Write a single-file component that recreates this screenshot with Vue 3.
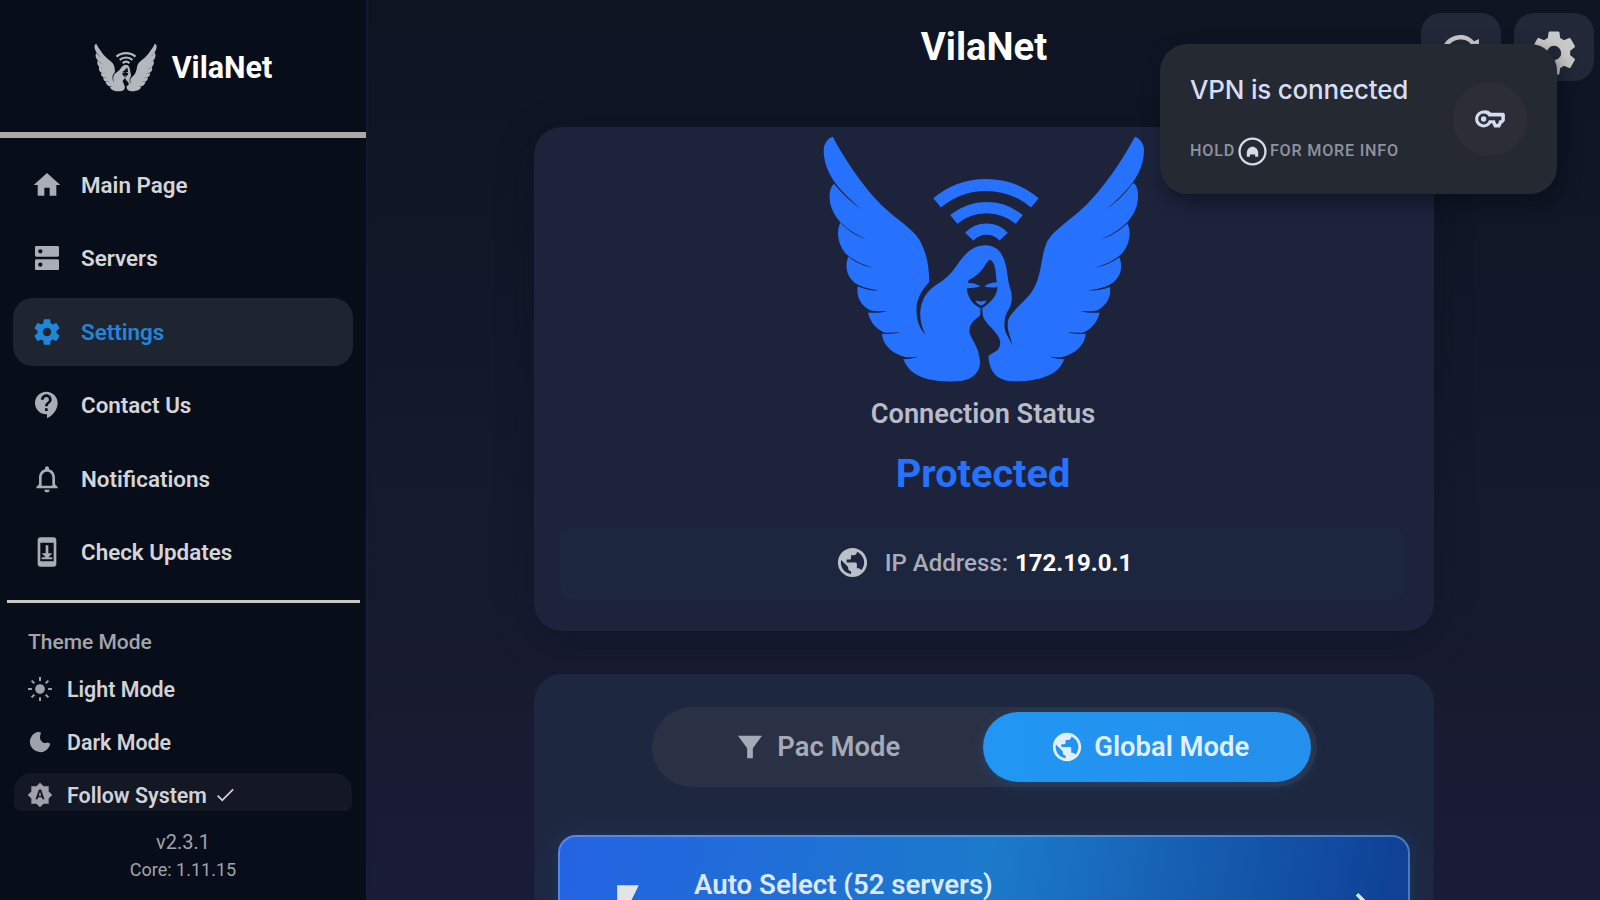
<script setup>
import { ref } from 'vue'

const icons = {
  home: 'M10 20v-6h4v6h5v-8h3L12 3 2 12h3v8z',
  servers: 'M20 13H4c-.55 0-1 .45-1 1v6c0 .55.45 1 1 1h16c.55 0 1-.45 1-1v-6c0-.55-.45-1-1-1zM7 18.6a1.6 1.6 0 1 1 0-3.2 1.6 1.6 0 0 1 0 3.2zM20 3H4c-.55 0-1 .45-1 1v6c0 .55.45 1 1 1h16c.55 0 1-.45 1-1V4c0-.55-.45-1-1-1zM7 8.6a1.6 1.6 0 1 1 0-3.2 1.6 1.6 0 0 1 0 3.2z',
  settings: 'M19.14 12.94c.04-.3.06-.61.06-.94 0-.32-.02-.64-.07-.94l2.03-1.58c.18-.14.23-.41.12-.61l-1.92-3.32c-.12-.22-.37-.29-.59-.22l-2.39.96c-.5-.38-1.03-.7-1.62-.94l-.36-2.54c-.04-.24-.24-.41-.48-.41h-3.84c-.24 0-.43.17-.47.41l-.36 2.54c-.59.24-1.13.57-1.62.94l-2.39-.96c-.22-.08-.47 0-.59.22L2.74 8.87c-.12.21-.08.47.12.61l2.03 1.58c-.05.3-.09.63-.09.94s.02.64.07.94l-2.03 1.58c-.18.14-.23.41-.12.61l1.92 3.32c.12.22.37.29.59.22l2.39-.96c.5.38 1.03.7 1.62.94l.36 2.54c.05.24.24.41.48.41h3.84c.24 0 .44-.17.47-.41l.36-2.54c.59-.24 1.13-.56 1.62-.94l2.39.96c.22.08.47 0 .59-.22l1.92-3.32c.12-.22.07-.47-.12-.61l-2.01-1.58zM12 15.2a3.2 3.2 0 1 1 0-6.4 3.2 3.2 0 0 1 0 6.4z',
  contact: 'M11.5 2C6.81 2 3 5.81 3 10.5S6.81 19 11.5 19h.5v3c4.86-2.34 8-7 8-11.5C20 5.81 16.19 2 11.5 2zm1 14.5h-2v-2h2v2zm0-3.5h-2c0-3.25 3-3 3-5 0-1.1-.9-2-2-2s-2 .9-2 2h-2c0-2.21 1.79-4 4-4s4 1.79 4 4c0 2.5-3 2.75-3 5z',
  bell: 'M12 22c1.1 0 2-.9 2-2h-4c0 1.1.9 2 2 2zm6-6v-5c0-3.07-1.63-5.64-4.5-6.32V4c0-.83-.67-1.5-1.5-1.5s-1.5.67-1.5 1.5v.68C7.64 5.36 6 7.92 6 11v5l-2 2v1h16v-1l-2-2zm-2 1H8v-6c0-2.48 1.51-4.5 4-4.5s4 2.02 4 4.5v6z',
  update: 'M17 1H7c-1.1 0-2 .9-2 2v18c0 1.1.9 2 2 2h10c1.1 0 2-.9 2-2V3c0-1.1-.9-2-2-2zM17 19H7V5h10v14zm-1-6h-3V7h-2v6H8l3 3H8v1.5h8V16h-3z',
  sun: 'M12 7.5a4.5 4.5 0 1 0 0 9 4.5 4.5 0 0 0 0-9zM11.1 1h1.8v3.5h-1.8zM11.1 19.5h1.8V23h-1.8zM1 11.1h3.5v1.8H1zM19.5 11.1H23v1.8h-3.5zM4.9 3.6l2.5 2.5-1.3 1.3-2.5-2.5zM19.1 3.6l1.3 1.3-2.5 2.5-1.3-1.3zM6.1 16.6l1.3 1.3-2.5 2.5-1.3-1.3zM17.9 16.6l2.5 2.5-1.3 1.3-2.5-2.5z',
  moon: 'M10.5 2.5A9.5 9.5 0 1 0 21.5 13.5L19 12.5a5 5 0 0 1-7-4.5c0-2 .6-3.5 1-4.5z',
  auto: 'M10.85 12.65h2.3L12 9l-1.15 3.65zM20 8.69V4h-4.69L12 .69 8.69 4H4v4.69L.69 12 4 15.31V20h4.69L12 23.31 15.31 20H20v-4.69L23.31 12 20 8.69zM14.3 16l-.7-2h-3.2l-.7 2H7.8L11 7h2l3.2 9h-1.9z',
  check: 'M9 16.4L4.6 12l-1.3 1.3L9 19 21.5 6.5l-1.3-1.3z',
  globe: 'M12 2C6.48 2 2 6.48 2 12s4.48 10 10 10 10-4.48 10-10S17.52 2 12 2zm-1 17.93c-3.95-.49-7-3.85-7-7.93 0-.62.08-1.21.21-1.79L9 15v1c0 1.1.9 2 2 2v1.93zm6.9-2.54c-.26-.81-1-1.39-1.9-1.39h-1v-3c0-.55-.45-1-1-1H8v-2h2c.55 0 1-.45 1-1V7h2c1.1 0 2-.9 2-2v-.41c2.93 1.19 5 4.06 5 7.41 0 2.08-.8 3.97-2.1 5.39z',
  filter: 'M3.5 4h17L14 12.8V20h-4v-7.2z',
  refresh: 'M12 4C8.4 4 5.4 5.8 4 9h2.3C7.5 7.2 9.6 6 12 6c1.66 0 3.14.69 4.22 1.78L13 11h7V5.8l-2.2 1C16.4 5.2 14.3 4 12 4zM4 13h2a6 6 0 0 0 11.6 1.5h2.1A8 8 0 0 1 4 13z',
  bolt: 'M7 2v11h3v9l7-12h-4l4-8z',
  chevron: 'M10 6L8.59 7.41 13.17 12l-4.58 4.59L10 18l6-6z',
  key: 'M7.5 6a6 6 0 1 0 5.2 9h.8l1.5 3h4l1.5-3h.5l1.5-2V8.5l-1-1h-8.8A6 6 0 0 0 7.5 6zm0 2.2c1.6 0 2.9.8 3.5 2h9v2.6h-1.5l-.8 2.600h-1.400l-.8-2.600h-4.300A3.8 3.8 0 1 1 7.5 8.200zm0 1.900a1.900 1.900 0 1 0 0 3.800 1.900 1.900 0 0 0 0-3.800z',
}

const nav = [
  { label: 'Main Page', icon: 'home' },
  { label: 'Servers', icon: 'servers' },
  { label: 'Settings', icon: 'settings' },
  { label: 'Contact Us', icon: 'contact' },
  { label: 'Notifications', icon: 'bell' },
  { label: 'Check Updates', icon: 'update' },
]

const themes = [
  { label: 'Light Mode', icon: 'sun' },
  { label: 'Dark Mode', icon: 'moon' },
  { label: 'Follow System', icon: 'auto' },
]

const modes = [
  { label: 'Pac Mode', icon: 'filter' },
  { label: 'Global Mode', icon: 'globe' },
]

const page = ref('Settings')
const theme = ref('Follow System')
const mode = ref('Global Mode')
</script>

<template>
  <svg class="defs" width="0" height="0">
    <symbol id="angel" viewBox="60 40 980 755">
      <!-- wings, hair and the two lobes at the bottom -->
      <path
        d="M95 48C130 115 190 205 250 262C290 300 335 325 357 360C375 395 386 430 386 487
        C360 515 345 545 348 580C350 612 360 632 376 646C357 615 354 575 366 545C376 518 395 503 425 484
        C470 452 480 405 520 385C555 368 592 376 607 408C625 442 620 480 632 510C639 535 634 556 628 566
        C608 595 611 630 620 645L637 677C632 650 620 635 624 605C630 580 660 560 690 525C728 475 720 420 740 370
        C755 335 812 300 852 262C912 205 972 115 1007 48
        C1017 50 1030 62 1034 80C1038 120 1020 160 1000 187C980 215 950 240 922 268C950 245 975 225 1002 188
        C1020 195 1020 240 1010 265C1002 285 993 295 985 306C960 330 935 345 907 358C935 348 960 333 984 310
        C996 330 992 360 982 380C975 395 968 402 960 408C940 425 915 435 887 444C915 438 940 428 960 412
        C970 435 968 460 950 480C945 487 938 491 930 496C910 505 890 510 867 512C890 514 910 510 932 502
        C936 530 925 555 895 572C880 576 865 575 842 575C865 580 880 581 901 579
        C892 615 870 632 850 640C835 641 820 640 804 638C820 644 840 645 859 643
        C855 680 825 705 785 714C772 715 760 714 749 713C762 718 778 720 794 720C774 775 704 787 637 787
        C592 785 567 760 565 710L592 693C604 680 602 665 594 650C578 625 553 610 548 588L546 566
        C570 550 590 530 592 505L588 470C586 440 580 421 568 420C550 435 555 455 505 482
        L500 512C505 540 522 558 541 566L540 588C520 603 505 615 508 640C515 665 536 680 540 730
        C538 765 510 787 465 787C400 788 330 780 308 720C324 720 340 718 353 713C342 714 330 715 317 714
        C277 705 247 680 243 643C262 645 282 644 298 638C282 640 267 641 252 640
        C232 632 210 615 201 579C222 581 237 580 260 575C237 575 222 576 207 572C177 555 166 530 170 500
        C192 510 212 514 235 512C212 510 192 505 172 496C164 491 157 487 152 480C134 460 132 435 142 410
        C162 428 187 438 215 444C187 435 162 425 142 408C134 402 127 395 120 380C110 360 106 330 118 308
        C142 333 167 348 195 358C167 345 142 330 117 306C109 295 100 285 92 265C82 240 82 205 98 190
        C127 225 152 245 180 268C152 240 122 215 102 187C82 160 64 120 68 80C72 62 85 50 95 48Z"
      />
      <!-- eyes and mouth -->
      <path d="M500 490Q522 488 541 500Q520 508 499 504ZM552 500Q570 488 592 488V502Q570 506 552 500ZM525 543Q543 548 560 543Q552 557 543 557Q533 557 525 543Z" />
      <g fill="none" stroke="currentColor">
        <path d="M410 248A228 228 0 0 1 705 248" stroke-width="36" />
        <path d="M460 298A155 155 0 0 1 658 298" stroke-width="34" />
        <path d="M507 350A71 71 0 0 1 611 350" stroke-width="34" />
      </g>
    </symbol>
  </svg>

  <div class="app">
    <aside class="sidebar">
      <div class="brand">
        <svg class="brand-logo"><use href="#angel" /></svg>
        <span>VilaNet</span>
      </div>

      <nav class="nav">
        <a
          v-for="item in nav"
          :key="item.label"
          class="nav-item"
          :class="{ active: item.label === page }"
          @click="page = item.label"
        >
          <svg viewBox="0 0 24 24"><path :d="icons[item.icon]" /></svg>
          <span>{{ item.label }}</span>
        </a>
      </nav>

      <div class="themes">
        <p class="themes-title">Theme Mode</p>
        <a
          v-for="item in themes"
          :key="item.label"
          class="theme"
          :class="{ active: item.label === theme }"
          @click="theme = item.label"
        >
          <svg viewBox="0 0 24 24"><path :d="icons[item.icon]" /></svg>
          <span>{{ item.label }}</span>
          <svg v-if="item.label === theme" class="check" viewBox="0 0 24 24"><path :d="icons.check" /></svg>
        </a>
      </div>

      <div class="version">
        <p>v2.3.1</p>
        <p class="core">Core: 1.11.15</p>
      </div>
    </aside>

    <main class="main">
      <header class="header">
        <h1>VilaNet</h1>
        <div class="actions">
          <button><svg viewBox="0 0 24 24"><path :d="icons.refresh" /></svg></button>
          <button><svg viewBox="0 0 24 24"><path :d="icons.settings" /></svg></button>
        </div>
      </header>

      <section class="card status">
        <svg class="status-logo"><use href="#angel" /></svg>
        <p class="status-label">Connection Status</p>
        <p class="status-value">Protected</p>
        <div class="ip">
          <svg viewBox="0 0 24 24"><path :d="icons.globe" /></svg>
          <span class="ip-label">IP Address:</span>
          <span class="ip-value">172.19.0.1</span>
        </div>
      </section>

      <section class="card connect">
        <div class="toggle">
          <button
            v-for="item in modes"
            :key="item.label"
            :class="{ active: item.label === mode }"
            @click="mode = item.label"
          >
            <svg viewBox="0 0 24 24"><path :d="icons[item.icon]" /></svg>
            <span>{{ item.label }}</span>
          </button>
        </div>
        <div class="server">
          <svg class="bolt" viewBox="0 0 24 24"><path :d="icons.bolt" /></svg>
          <span>Auto Select (52 servers)</span>
          <svg class="chevron" viewBox="0 0 24 24"><path :d="icons.chevron" /></svg>
        </div>
      </section>
    </main>

    <div class="toast">
      <div class="toast-text">
        <p class="toast-title">VPN is connected</p>
        <p class="toast-hint">
          <span>HOLD</span>
          <svg viewBox="0 0 28 28">
            <circle cx="14" cy="14" r="12.5" fill="none" stroke="currentColor" stroke-width="2.2" />
            <path d="M14 9.5c3 0 5 2.5 5.5 5V19h-3v-2h-5v2h-3v-4.5c.5-2.5 2.5-5 5.5-5z" />
          </svg>
          <span>FOR MORE INFO</span>
        </p>
      </div>
      <div class="toast-icon">
        <svg viewBox="0 0 24 24"><path :d="icons.key" /></svg>
      </div>
    </div>
  </div>
</template>

<style>
body {
  margin: 0;
  overflow: hidden;
  background: #0f1424;
}
</style>

<style scoped>
* {
  box-sizing: border-box;
}

p,
h1 {
  margin: 0;
}

svg {
  flex: none;
  fill: currentColor;
}

a,
button {
  cursor: pointer;
}

button {
  border: 0;
  padding: 0;
  font: inherit;
  color: inherit;
}

.defs {
  position: absolute;
}

.app {
  position: relative;
  display: flex;
  width: 1600px;
  height: 900px;
  overflow: hidden;
  font-family: Roboto, sans-serif;
  color: #fff;
  background: linear-gradient(180deg, #0e1422 0%, #13192b 45%, #181b30 78%, #1a1c37 100%);
}

.sidebar {
  display: flex;
  flex-direction: column;
  width: 366px;
  background: #080d1a;
  box-shadow: 1px 0 3px #1b2036;
}

.brand {
  display: flex;
  align-items: center;
  justify-content: center;
  gap: 15px;
  height: 138px;
  padding-top: 3px;
  border-bottom: 6px solid #aba8a8;
  font-size: 30.5px;
  font-weight: 700;
}

.brand-logo {
  width: 63px;
  height: 49px;
  color: #b5b7be;
}

.nav {
  display: grid;
  grid-auto-rows: 68px;
  gap: 5.4px;
  margin: 0 6px 0 7px;
  padding: 13px 7px 14.5px 6px;
  border-bottom: 3px solid #cbc8c5;
}

.nav-item {
  display: flex;
  align-items: center;
  gap: 18px;
  padding-left: 18px;
  border-radius: 20px;
  font-size: 22.4px;
  font-weight: 600;
  color: #d4d5d9;
}

.nav-item svg {
  width: 32px;
  height: 32px;
  color: #abadb5;
}

.nav-item.active,
.nav-item.active svg {
  color: #2086da;
}

.nav-item.active {
  background: #1f2431;
}

.themes {
  padding: 22px 14px 0;
}

.themes-title {
  padding-left: 14px;
  margin-bottom: 8px;
  font-size: 21px;
  line-height: 34px;
  font-weight: 500;
  color: #a3a5ac;
}

.theme {
  display: flex;
  align-items: center;
  gap: 14px;
  height: 38px;
  margin-top: 15px;
  padding: 6px 0 0 13px;
  font-size: 21.4px;
  font-weight: 600;
  color: #d1d2d7;
}

.themes-title + .theme {
  margin-top: 0;
}

.theme.active {
  background: #141825;
  border-radius: 18px 18px 6px 6px;
}

.theme svg {
  width: 26px;
  height: 26px;
  color: #a0a2ab;
}

.theme .check {
  width: 22px;
  height: 22px;
  margin-left: -7px;
  color: #d1d2d7;
}

.version {
  padding-top: 18px;
  text-align: center;
  font-size: 20px;
  line-height: 27px;
  color: #a1a3aa;
}

.core {
  font-size: 18px;
}

.main {
  flex: 1;
  display: flex;
  flex-direction: column;
  align-items: center;
  padding-left: 2px;
}

.header {
  flex: none;
  display: grid;
  grid-template-columns: 1fr auto 1fr;
  width: 100%;
  height: 127px;
  padding: 13px 6px 0 0;
}

.header h1 {
  grid-column: 2;
  padding-left: 6px;
  font-size: 38.3px;
  line-height: 67px;
  font-weight: 700;
}

.actions {
  display: flex;
  justify-content: flex-end;
  gap: 13px;
}

.actions button {
  display: grid;
  place-items: center;
  width: 80px;
  height: 68px;
  padding-top: 11px;
  border-radius: 20px;
  background: #222838;
  color: #c9c9ca;
}

.actions svg {
  width: 54px;
  height: 54px;
}

.card {
  flex: none;
  width: 900px;
  border-radius: 28px;
}

.status {
  display: flex;
  flex-direction: column;
  align-items: center;
  height: 504px;
  padding: 7px 28px 0 26px;
  background: #1c233b;
  box-shadow: 0 10px 36px rgba(9, 15, 30, 0.35);
}

.status-logo {
  width: 325px;
  height: 250px;
  color: #2672ff;
}

.status-label {
  margin-top: 11px;
  font-size: 27.2px;
  line-height: 38px;
  font-weight: 600;
  color: #b9bcc6;
}

.status-value {
  margin-top: 13px;
  font-size: 39.7px;
  line-height: 55px;
  font-weight: 700;
  color: #2672ff;
}

.ip {
  display: flex;
  align-items: center;
  justify-content: center;
  width: 100%;
  height: 73px;
  margin-top: 26px;
  padding: 0 0 2px 1px;
  border-radius: 14px;
  background: #1c263f;
  font-size: 24px;
}

.ip svg {
  width: 35px;
  height: 35px;
  margin-right: 15px;
  color: #bbbfc8;
}

.ip-label {
  margin-right: 7px;
  font-weight: 500;
  color: #a9adb9;
}

.ip-value {
  font-weight: 700;
}

.connect {
  height: 300px;
  margin-top: 43px;
  padding: 33px 24px 0;
  background: #1e2740;
}

.toggle {
  display: grid;
  grid-template-columns: 1fr 1fr;
  width: 665px;
  height: 80px;
  margin: 0 auto;
  padding: 5px 6px 5px 4px;
  border-radius: 40px;
  background: #2a3145;
}

.toggle button {
  display: flex;
  align-items: center;
  justify-content: center;
  gap: 10px;
  height: 70px;
  padding-right: 5px;
  border-radius: 35px;
  background: none;
  font-size: 27.4px;
  font-weight: 600;
  color: #a6a9b6;
}

.toggle button.active {
  padding: 0 0 0 6px;
  background: linear-gradient(90deg, #2196f3, #2490eb);
  box-shadow: 0 3px 14px rgba(33, 130, 220, 0.2);
  color: #e2efff;
}

.toggle svg {
  width: 34px;
  height: 34px;
}

.server {
  display: flex;
  align-items: flex-start;
  height: 130px;
  margin-top: 48px;
  padding: 42px 24px 0 42px;
  border: 2px solid rgba(125, 165, 235, 0.55);
  border-radius: 18px;
  background: linear-gradient(100deg, #2463e4 0%, #1c7acb 50%, #0f4297 96%) border-box;
  box-shadow: 0 0 24px rgba(28, 100, 180, 0.25);
  font-size: 27.6px;
  line-height: 28px;
  font-weight: 600;
  color: #dce8ff;
}

.server span {
  flex: 1;
  margin: -8px 0 0 40px;
}

.bolt {
  width: 52px;
  height: 52px;
  margin-top: 2px;
  color: #e2e4e8;
}

.chevron {
  width: 44px;
  height: 44px;
  margin-top: 3px;
}

/* system notification lying over the app */
.toast {
  position: absolute;
  top: 44px;
  right: 43px;
  display: flex;
  justify-content: space-between;
  width: 397px;
  height: 150px;
  padding: 28px 30px 0;
  border-radius: 27px;
  background: #252932;
  box-shadow: 4px 8px 18px rgba(5, 9, 18, 0.5);
}

.toast-title {
  font-family: Inter, sans-serif;
  font-size: 26px;
  line-height: 36px;
  font-weight: 500;
  letter-spacing: -0.2px;
  color: #d5def3;
}

.toast-hint {
  display: flex;
  align-items: center;
  gap: 3px;
  margin-top: 29px;
  font-size: 16.2px;
  line-height: 26px;
  font-weight: 500;
  letter-spacing: 0.75px;
  color: #8d939f;
}

.toast-hint span {
  padding-bottom: 2px;
}

.toast-hint svg {
  width: 29px;
  height: 29px;
  color: #d5dae6;
}

.toast-icon {
  display: grid;
  place-items: center;
  width: 74px;
  height: 74px;
  margin-top: 10px;
  border-radius: 50%;
  background: #2c2d37;
  color: #d3dcf0;
}

.toast-icon svg {
  width: 34px;
  height: 34px;
}
</style>
